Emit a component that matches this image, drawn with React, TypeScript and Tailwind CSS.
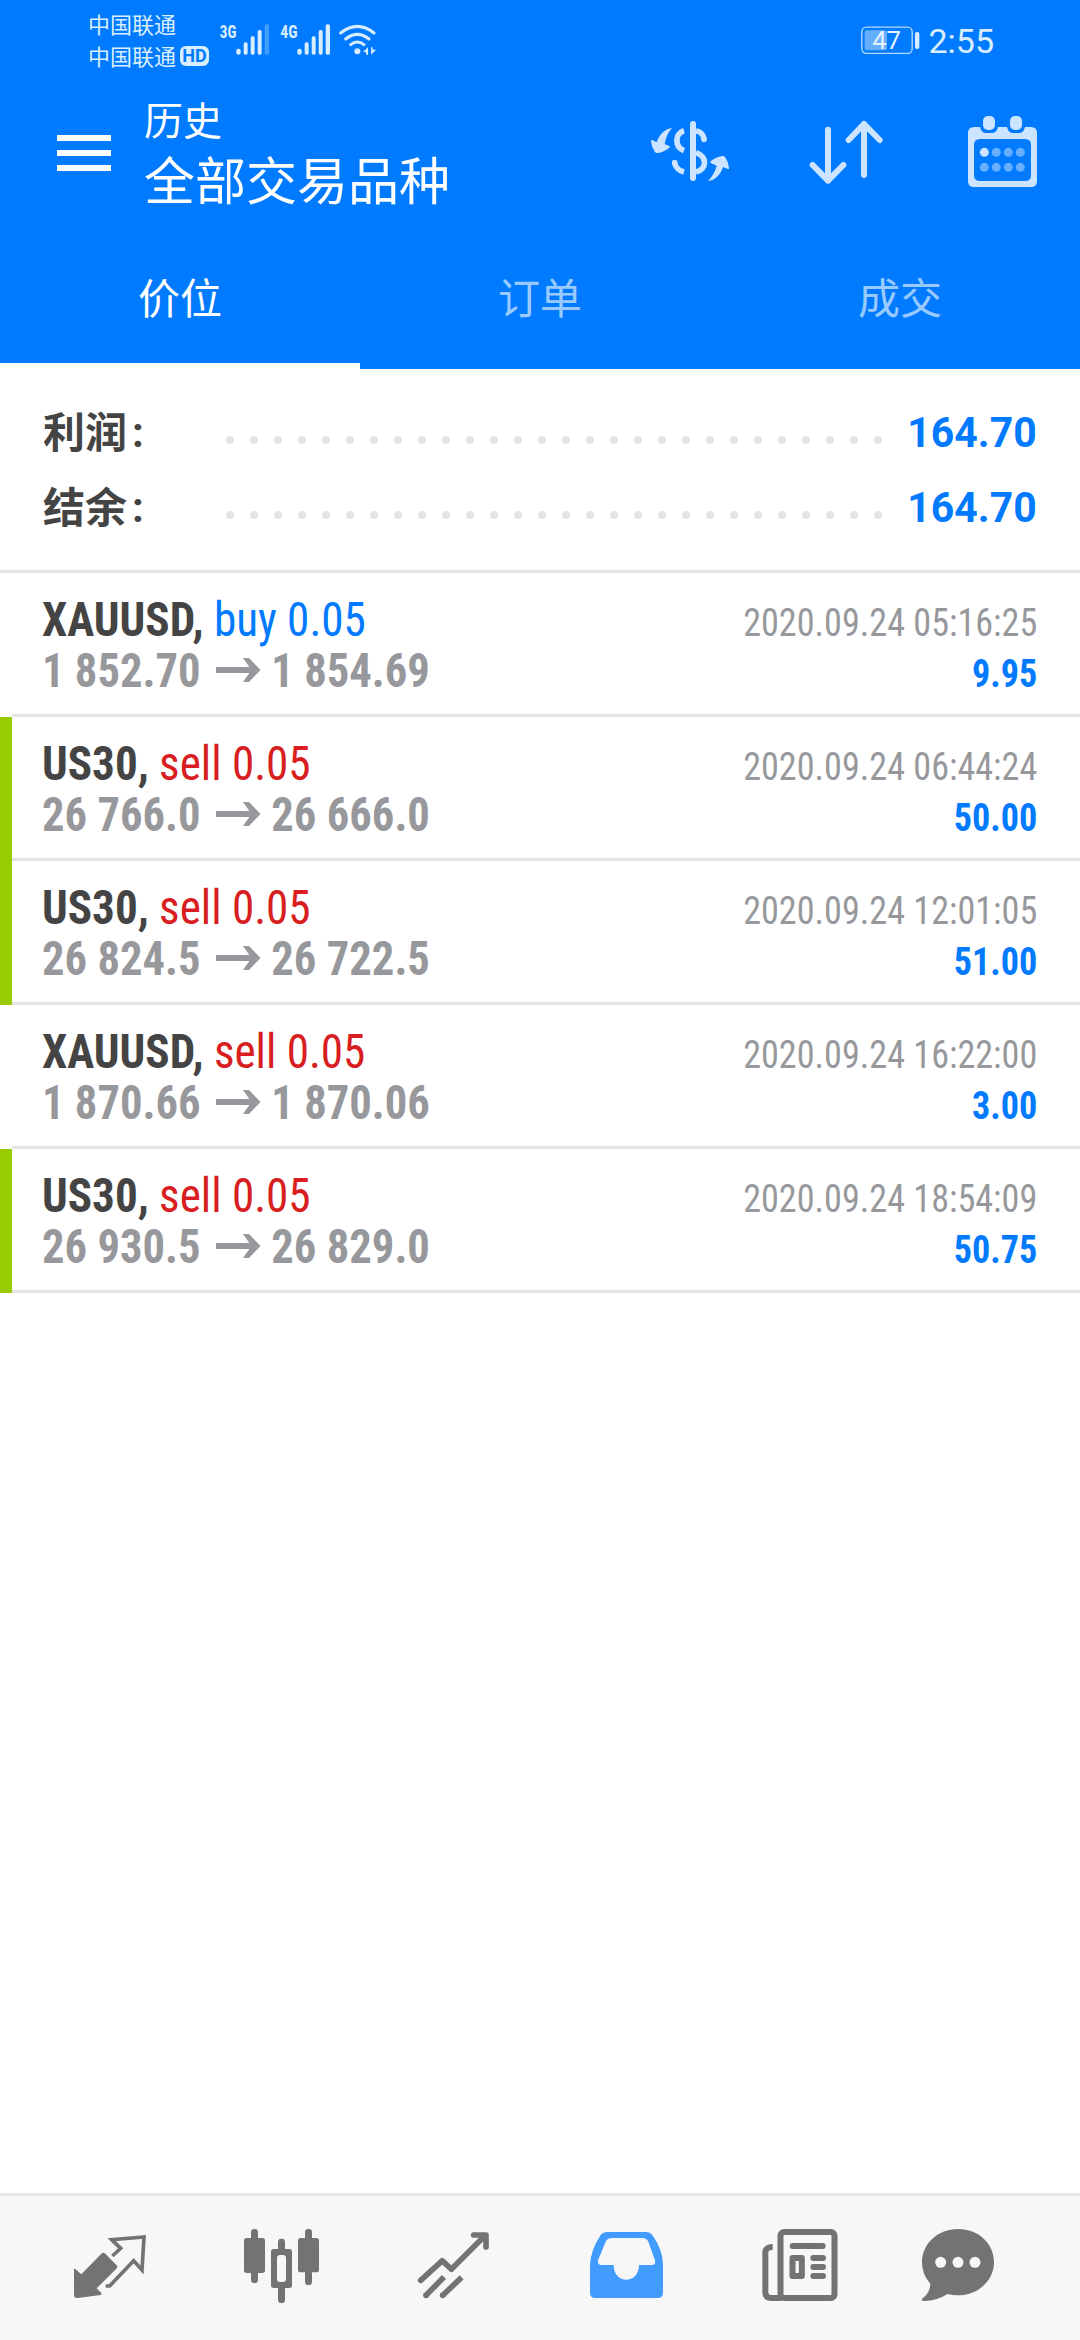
import React from 'react';
import clsx from 'clsx';

type Deal = {
  symbol: string;
  side: 'buy' | 'sell';
  volume: string;
  open: string;
  close: string;
  time: string;
  profit: string;
  marked: boolean;
};

const deals: Deal[] = [
  { symbol: 'XAUUSD', side: 'buy', volume: '0.05', open: '1 852.70', close: '1 854.69', time: '2020.09.24 05:16:25', profit: '9.95', marked: false },
  { symbol: 'US30', side: 'sell', volume: '0.05', open: '26 766.0', close: '26 666.0', time: '2020.09.24 06:44:24', profit: '50.00', marked: true },
  { symbol: 'US30', side: 'sell', volume: '0.05', open: '26 824.5', close: '26 722.5', time: '2020.09.24 12:01:05', profit: '51.00', marked: true },
  { symbol: 'XAUUSD', side: 'sell', volume: '0.05', open: '1 870.66', close: '1 870.06', time: '2020.09.24 16:22:00', profit: '3.00', marked: false },
  { symbol: 'US30', side: 'sell', volume: '0.05', open: '26 930.5', close: '26 829.0', time: '2020.09.24 18:54:09', profit: '50.75', marked: true },
];

const summary = [
  { label: '利润', value: '164.70' },
  { label: '结余', value: '164.70' },
];

const tabs = ['价位', '订单', '成交'];

const Signals: React.FC = () => (
  <svg className="w-[160px] h-[36px]" viewBox="478 70 480 108" fill="#d8eeff">
    <g className="font-['Roboto_Condensed','Roboto',sans-serif] font-bold" fontSize="55">
      <text x="480" y="114" textLength="50" lengthAdjust="spacingAndGlyphs">3G</text>
      <text x="662" y="114" textLength="52" lengthAdjust="spacingAndGlyphs">4G</text>
    </g>
    <rect x="530" y="147" width="13" height="18" rx="6" />
    <rect x="552" y="128" width="12" height="37" rx="5" />
    <rect x="573" y="110" width="12" height="55" rx="5" />
    <rect x="594" y="91" width="12" height="74" rx="5" />
    <rect x="615" y="74" width="13" height="91" rx="5" opacity=".3" />
    <rect x="713" y="147" width="13" height="18" rx="6" />
    <rect x="735" y="128" width="12" height="37" rx="5" />
    <rect x="756" y="110" width="12" height="55" rx="5" />
    <rect x="777" y="91" width="12" height="74" rx="5" />
    <rect x="798" y="74" width="13" height="91" rx="5" />
    <g fill="none" stroke="#d8eeff" strokeWidth="9" strokeLinecap="round">
      <path d="M843 100 Q893 60 943 100" />
      <path d="M858 118 Q893 90 928 118" />
      <path d="M873 135 Q893 119 913 135" />
    </g>
    <circle cx="893" cy="155" r="9" />
    <path d="M910 157 L925 143 V165 H919 V157 Z" />
    <path d="M934 143 H939 V150 H949 L935 165 Z" />
  </svg>
);

const Battery: React.FC = () => (
  <svg className="w-[59px] h-[28px]" viewBox="125 78 177 84">
    <rect x="127.500" y="81.500" width="151" height="79" rx="14" fill="none" stroke="#b5dcff" strokeWidth="4" />
    <rect x="136" y="91" width="67" height="60" rx="6" fill="#66afff" />
    <rect x="287" y="96" width="13" height="51" rx="6" fill="#d8eeff" />
    <text x="159" y="148" fontSize="77" fill="#e4f3ff" textLength="86" lengthAdjust="spacing" className="font-['Roboto',sans-serif]">47</text>
  </svg>
);

const StatusBar: React.FC = () => (
  <div className="h-[84px] flex text-[#d8eeff]">
    <div className="ml-[88px] pt-[7px] w-[130px] text-[22px] leading-8 font-['Noto_Sans_CJK_SC',sans-serif]">
      <div>中国联通</div>
      <div className="flex items-center">
        中国联通
        <span className="ml-1 mt-0.5 w-[29px] h-5 rounded-md bg-[#d8eeff] text-[#007aff] font-['Roboto',sans-serif] text-[18px] leading-5 font-bold text-center">HD</span>
      </div>
    </div>
    <div className="pt-[23px] ml-[1px]"><Signals /></div>
    <div className="ml-auto mr-[86px] flex pt-[26px]">
      <Battery />
      <div className="ml-2 -mt-1 text-[34px] leading-[38px] font-['Roboto',sans-serif]">2:55</div>
    </div>
  </div>
);

const SwapCurrencyIcon = () => (
  <svg className="w-[80px] h-[62px]" viewBox="90 90 240 186" fill="#cce4ff">
    <rect x="210" y="93" width="18" height="180" rx="9" />
    <g fill="none" stroke="#cce4ff" strokeWidth="17">
      <path d="M192 122 C164 130 163 170 192 182" />
      <path d="M228 122 C242 125 252 136 252 148" />
      <path d="M228 188 C262 200 262 238 228 246" />
      <path d="M164 218 C166 230 176 242 192 246" />
    </g>
    <circle cx="252" cy="148" r="8.500" />
    <circle cx="164" cy="218" r="8.500" />
    <path d="M156 114 C136 116 118 132 110 157 L96 150 Q92 149 93 154 Q95 172 105 186 Q108 190 113 189 Q132 186 148 173 Q151 170 148 168 L134 162 C137 143 144 128 156 114 Z" />
    <path d="M264 273 C284 271 302 255 309 231 L324 237 Q328 238 327 233 Q325 215 315 201 Q312 197 307 198 Q288 201 272 214 Q269 217 272 219 L290 227 C286 244 276 260 264 273 Z" />
  </svg>
);

const SortIcon = () => (
  <svg className="w-[74px] h-[65px]" viewBox="567 90 222 195" fill="none" stroke="#cce4ff" strokeWidth="18" strokeLinecap="round" strokeLinejoin="round">
    <path d="M624 119 V272 M578 225 L624 272 L670 225" />
    <path d="M732 255 V102 M686 150 L732 102 L779 150" />
  </svg>
);

const CalendarIcon = () => (
  <svg className="w-[69px] h-[73px]" viewBox="1044 75 207 219">
    <path fill="#cce4ff" fillRule="evenodd" d="M1062 111 H1080 Q1084 129 1098 129 H1116 Q1130 129 1134 111 H1161 Q1165 129 1179 129 H1197 Q1211 129 1215 111 H1233 Q1251 111 1251 129 V273 Q1251 291 1233 291 H1062 Q1044 291 1044 273 V129 Q1044 111 1062 111 Z M1080 147 Q1062 147 1062 165 V255 Q1062 273 1080 273 H1215 Q1233 273 1233 255 V165 Q1233 147 1215 147 Z" />
    <rect x="1089" y="78" width="36" height="42" rx="15" fill="#cce4ff" />
    <rect x="1170" y="78" width="36" height="42" rx="15" fill="#cce4ff" />
    {[1093, 1129, 1165, 1201].map((cx, i) => (
      <g key={cx} fill="#66afff">
        <circle cx={cx} cy="187" r="13.500" fill={i === 0 ? '#cce4ff' : '#66afff'} />
        <circle cx={cx} cy="232" r="13.500" />
      </g>
    ))}
  </svg>
);

const Header: React.FC = () => (
  <header className="bg-[#007aff] h-[369px] flex flex-col">
    <StatusBar />
    <div className="flex h-[148px]">
      <button className="ml-[57px] mt-[51px] flex w-[54px] h-9 flex-col justify-between">
        <span className="h-1.5 w-full bg-white" />
        <span className="h-1.5 w-full bg-white" />
        <span className="h-1.5 w-full bg-white" />
      </button>
      <div className="ml-[33px] pt-[6px] text-white font-['Noto_Sans_CJK_SC',sans-serif]">
        <div className="text-[39px] leading-[56px]">历史</div>
        <div className="text-[51px] leading-[64px]">全部交易品种</div>
      </div>
      <div className="ml-auto mr-[43px] flex">
        <div className="mt-9 mr-[79px]"><SwapCurrencyIcon /></div>
        <div className="mt-9 mr-[85px]"><SortIcon /></div>
        <div className="mt-[31px]"><CalendarIcon /></div>
      </div>
    </div>
    <nav className="grid grid-cols-3 h-[137px] text-[42px] leading-[60px] text-center font-['Noto_Sans_CJK_SC',sans-serif]">
      {tabs.map((tab, i) => (
        <div key={tab} className={clsx('pt-[34px] border-b-6', i === 0 ? 'text-white border-white' : 'text-[#99caff] border-transparent')}>
          {tab}
        </div>
      ))}
    </nav>
  </header>
);

const Summary: React.FC = () => (
  <section className="h-[201px] pt-[26px] px-[43px]">
    {summary.map(row => (
      <div key={row.label} className="flex h-[75px] text-[42px] leading-[75px] font-['Roboto','Noto_Sans_CJK_SC',sans-serif]">
        <div className="flex w-[183px] font-bold text-[#444]">
          <span className="-mt-[3px] font-['Noto_Sans_CJK_SC',sans-serif]">{row.label}</span>
          <span className="ml-[5px]">:</span>
        </div>
        <div className="flex gap-4 pt-[41px]">
          {Array.from({ length: 28 }, (_, i) => (
            <span key={i} className="size-2 rounded-full bg-[#e4e4e4]" />
          ))}
        </div>
        <div className="ml-auto origin-right scale-x-[0.975] font-bold text-[#007aff]">{row.value}</div>
      </div>
    ))}
  </section>
);

const ArrowRight = () => (
  <svg className="ml-4 mr-3 mt-[13px] w-12 h-6" viewBox="0 0 48 24" fill="#97989c">
    <path d="M0 9 H36 L29 0 H35.500 L48 12 L35.500 24 H29 L36 15 H0 Z" />
  </svg>
);

const DealRow: React.FC<{ deal: Deal }> = ({ deal }) => (
  <li className="flex h-36">
    <div className={clsx('w-3', deal.marked && 'bg-[#99cc00]')} />
    <div className="flex-1 flex justify-between border-b-3 border-[#e4e4e4] pl-[30px] pr-[43px] leading-[51px]">
      <div className="pt-[21px] text-[48px]">
        <div className="origin-left scale-x-[0.94]">
          <span className="font-bold text-[#444]">{deal.symbol},</span>{' '}
          <span className={deal.side === 'buy' ? 'text-[#007aff]' : 'text-[#d81e1e]'}>{deal.side} {deal.volume}</span>
        </div>
        <div className="flex origin-left scale-x-[0.93] font-bold text-[#97989c]">
          {deal.open}
          <ArrowRight />
          {deal.close}
        </div>
      </div>
      <div className="pt-[25px] text-[39px] text-right origin-right scale-x-[0.927]">
        <div className="text-[#97989c]">{deal.time}</div>
        <div className="font-bold text-[#007aff]">{deal.profit}</div>
      </div>
    </div>
  </li>
);

// Bottom bar icons share one 300x222 grid so that they sit in equal cells
const QuotesIcon = () => (
  <svg className="w-[100px] h-[74px]" viewBox="60 147 300 222">
    <path fill="#737373" d="M102 268 Q102 265 106 267 L124 283 L184 221 Q190 216 196 221 L230 256 Q234 261 229 266 L170 325 L184 339 Q186 343 182 345 L114 354 Q102 355 102 345 Z" />
    <g fill="none" stroke="#737373" strokeWidth="11">
      <path d="M217 228 L242 205 L215 179 L312 171 L306 270 L281 242 L209 318 H197" />
    </g>
  </svg>
);

const CandlesIcon = () => (
  <svg className="w-[100px] h-[74px]" viewBox="576 147 300 222" fill="#737373">
    <rect x="633" y="147" width="21" height="162" rx="10" />
    <rect x="612" y="174" width="63" height="105" rx="8" />
    <rect x="795" y="147" width="21" height="168" rx="10" />
    <rect x="774" y="174" width="63" height="103" rx="8" />
    <rect x="714" y="176" width="21" height="193" rx="10" />
    <rect x="693" y="207" width="63" height="117" rx="8" />
    <rect x="711" y="225" width="27" height="81" rx="9" fill="#f7f7f7" />
  </svg>
);

const TradeIcon = () => (
  <svg className="w-[100px] h-[74px]" viewBox="1092 147 300 222" fill="none" stroke="#737373" strokeWidth="17">
    <path strokeLinecap="round" strokeLinejoin="round" d="M1142 301 L1207 242 L1234 268 L1336 166 M1301 165 H1338 V201" />
    <path d="M1155 349 L1212 291 M1206 348 L1265 292" />
    <g fill="#737373" stroke="none">
      <circle cx="1158" cy="346" r="8.500" />
      <circle cx="1208" cy="346" r="8.500" />
    </g>
  </svg>
);

const HistoryIcon = () => (
  <svg className="w-[100px] h-[74px]" viewBox="108 147 300 222">
    <path fill="#429bff" fillRule="evenodd" d="M202 156 H320 Q330 156 337 165 Q369 210 369 255 V338 Q369 354 353 354 H166 Q150 354 150 338 V255 Q152 210 182 165 Q189 156 202 156 Z M213 174 Q202 175 198 183 L174 241 Q172 255 184 255 H221 C221 314 297 314 297 255 H336 Q348 254 345 241 L324 183 Q319 174 305 174 Z" />
  </svg>
);

const NewsIcon = () => (
  <svg className="w-[100px] h-[74px]" viewBox="624 147 300 222" fill="none" stroke="#737373" strokeWidth="18">
    <rect x="721.500" y="156" width="162" height="198" rx="11" />
    <path d="M698 201 H694 Q676 203 676 218 V336 Q676 354 694 354 H724" />
    <path strokeLinecap="round" d="M758 198 H848 M820 234 H849 M820 261 H849 M820 288 H849" />
    <rect x="757.500" y="234" width="28" height="54" strokeLinejoin="round" />
  </svg>
);

const ChatIcon = () => (
  <svg className="w-[100px] h-[74px]" viewBox="1140 147 300 222">
    <path fill="#737373" d="M1254 147 C1316 147 1362 191 1362 247 C1362 302 1314 346 1254 346 Q1238 346 1223 342 Q1190 362 1155 363 C1144 363 1144 358 1149 354 Q1170 338 1171 311 Q1146 283 1146 247 C1146 191 1194 147 1254 147 Z" />
    <g fill="#f7f7f7">
      <circle cx="1202" cy="247" r="16.500" />
      <circle cx="1254" cy="247" r="16.500" />
      <circle cx="1305" cy="247" r="16.500" />
    </g>
  </svg>
);

const bottomIcons = [QuotesIcon, CandlesIcon, TradeIcon, HistoryIcon, NewsIcon, ChatIcon];

const App: React.FC = () => {
  return (
    <div className="w-[1080px] h-[2340px] flex flex-col overflow-hidden bg-white">
      <Header />
      <Summary />
      <ul className="flex-1 border-t-3 border-[#e4e4e4] font-['Roboto_Condensed','Roboto',sans-serif] font-stretch-condensed">
        {deals.map(deal => (
          <DealRow key={deal.time} deal={deal} />
        ))}
      </ul>
      <nav className="h-[147px] flex border-t-3 border-[#e4e4e4] bg-[#f7f7f7] pl-6 pt-[33px]">
        {bottomIcons.map((Icon, i) => (
          <div key={i} className="w-[172px] flex justify-center">
            <Icon />
          </div>
        ))}
      </nav>
    </div>
  );
};

export default App;
